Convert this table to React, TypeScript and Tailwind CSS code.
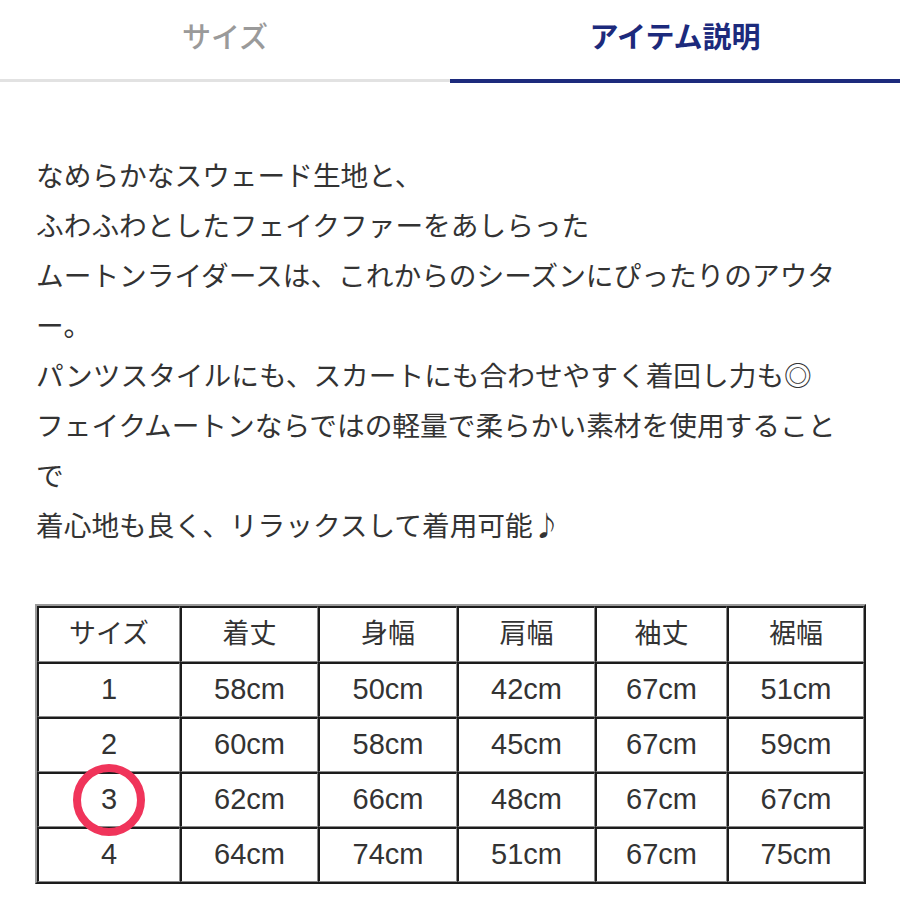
import React from 'react';

const font = { fontFamily: '"Noto Sans CJK JP", "Liberation Sans", sans-serif' };
const tableFont = { fontFamily: '"Liberation Sans", "Noto Sans CJK JP", sans-serif' };

const headers = ['サイズ', '着丈', '身幅', '肩幅', '袖丈', '裾幅'];
const colWidths = ['w-[143px]', 'w-[138px]', 'w-[139px]', 'w-[138px]', 'w-[132px]', 'w-[137px]'];

const rows = [
  ['1', '58cm', '50cm', '42cm', '67cm', '51cm'],
  ['2', '60cm', '58cm', '45cm', '67cm', '59cm'],
  ['3', '62cm', '66cm', '48cm', '67cm', '67cm'],
  ['4', '64cm', '74cm', '51cm', '67cm', '75cm'],
];

const lines = [
  'なめらかなスウェード生地と、',
  'ふわふわとしたフェイクファーをあしらった',
  'ムートンライダースは、これからのシーズンにぴったりのアウター。',
  'パンツスタイルにも、スカートにも合わせやすく着回し力も◎',
  'フェイクムートンならではの軽量で柔らかい素材を使用することで',
  '着心地も良く、リラックスして着用可能♪',
];

const cellCls =
  'border-t-2 border-l-2 border-b border-r border-t-[#1c1c1c] border-l-[#1c1c1c] border-b-[#8a8a8a] border-r-[#8a8a8a] text-center align-middle text-[#333] p-0';

export default function App() {
  return (
    <div className="w-[900px] h-[900px] bg-white overflow-hidden" style={font}>
      {/* Tabs */}
      <div className="flex">
        <div className="flex-1 flex flex-col">
          <div className="h-[79px] flex items-center justify-center pb-[8px] text-[29px] font-medium text-[#9a9a9a]">
            サイズ
          </div>
          <div className="h-[3px] bg-[#e2e2e2]" />
        </div>
        <div className="flex-1 flex flex-col">
          <div className="h-[79px] flex items-center justify-center pb-[8px] text-[29px] font-bold text-[#1c2a7c]">
            アイテム説明
          </div>
          <div className="h-[4px] bg-[#1c2a7c]" />
        </div>
      </div>

      {/* Description */}
      <div className="pl-[36px] pt-[66px] w-[856px] text-[27.7px] leading-[50px] text-[#333]">
        {lines.map((l, i) => (
          <p key={i}>{l}</p>
        ))}
      </div>

      {/* Size table */}
      <div className="pl-[35px] pt-[55px]">
        <table
          className="table-fixed w-[829px] border-separate border-spacing-0 border-t-2 border-l-2 border-b-2 border-r-2 border-t-[#9a9a9a] border-l-[#9a9a9a] border-b-[#1c1c1c] border-r-[#1c1c1c]"
          style={tableFont}
        >
          <colgroup>
            {colWidths.map((w, i) => (
              <col key={i} className={w} />
            ))}
          </colgroup>
          <tbody>
            <tr className="h-[56px]">
              {headers.map(h => (
                <td key={h} className={`${cellCls} text-[27px]`}>{h}</td>
              ))}
            </tr>
            {rows.map(r => (
              <tr key={r[0]} className="h-[55px]">
                {r.map((v, i) => (
                  <td key={i} className={`${cellCls} text-[29px]`}>
                    {i === 0 && v === '3' ? (
                      <div className="relative">
                        {v}
                        <span className="absolute left-1/2 top-1/2 -translate-x-1/2 -translate-y-1/2 w-[72px] h-[72px] rounded-full border-[8px] border-[#f0345a]" />
                      </div>
                    ) : v}
                  </td>
                ))}
              </tr>
            ))}
          </tbody>
        </table>
      </div>
    </div>
  );
}
